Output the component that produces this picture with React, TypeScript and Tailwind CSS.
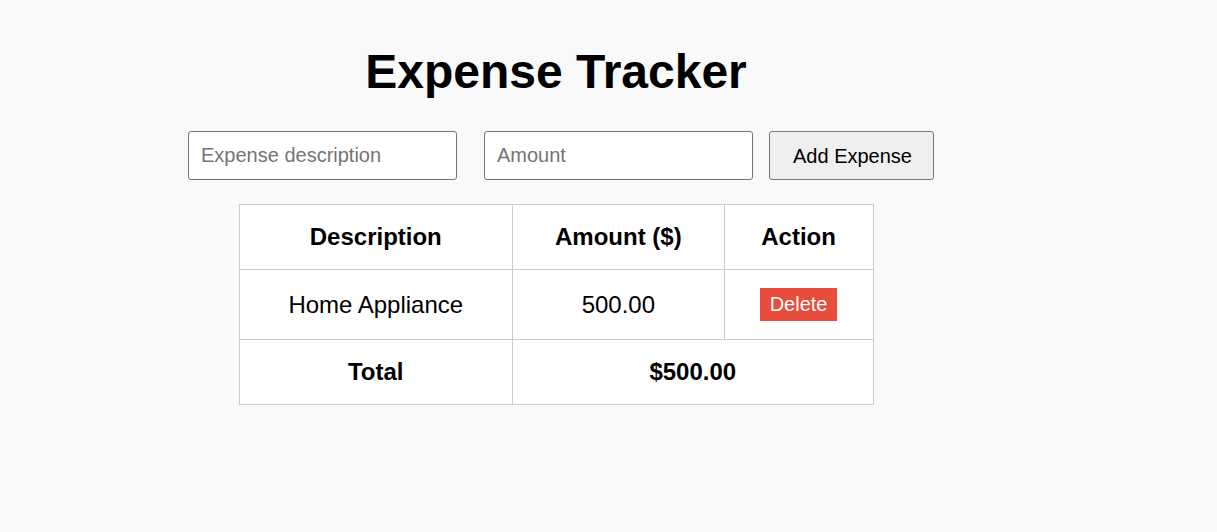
import React, { useState } from 'react'

type Expense = { id: number; description: string; amount: number }

export default function App() {
  const [expenses, setExpenses] = useState<Expense[]>([
    { id: 1, description: 'Home Appliance', amount: 500 },
  ])
  const [description, setDescription] = useState('')
  const [amount, setAmount] = useState('')

  const total = expenses.reduce((sum, e) => sum + e.amount, 0)

  const addExpense = () => {
    const value = parseFloat(amount)
    if (!description.trim() || isNaN(value)) return
    setExpenses([...expenses, { id: Date.now(), description, amount: value }])
    setDescription('')
    setAmount('')
  }

  const cell = 'border border-[#cccccc] px-[15px] py-[18px] text-center'

  return (
    <div className="min-h-[532px] w-full bg-[#f9f9f9] font-['Liberation_Sans',Arial,sans-serif] text-black">
      <div className="flex w-[1112px] flex-col items-center pt-[44px]">
        <h1 className="text-[48px] leading-[55px] font-bold">Expense Tracker</h1>

        <div className="mt-[32px] flex items-center pl-[10px]">
          <input
            type="text"
            placeholder="Expense description"
            value={description}
            onChange={(e) => setDescription(e.target.value)}
            className="h-[49px] w-[269px] rounded-[3px] border border-[#767676] bg-white px-[12px] text-[20px] placeholder:text-[#757575] outline-none"
          />
          <input
            type="number"
            placeholder="Amount"
            value={amount}
            onChange={(e) => setAmount(e.target.value)}
            className="ml-[27px] h-[49px] w-[269px] rounded-[3px] border border-[#767676] bg-white px-[12px] text-[20px] placeholder:text-[#757575] outline-none"
          />
          <button
            type="button"
            onClick={addExpense}
            className="ml-[16px] h-[49px] w-[165px] rounded-[3px] border border-[#767676] bg-[#efefef] pl-[2px] text-[20px]"
          >
            Add Expense
          </button>
        </div>

        <table className="mt-[24px] w-[635px] border-collapse bg-white text-[24px] leading-[28px]">
          <thead>
            <tr>
              <th className={`${cell} w-[274px] font-bold`}>Description</th>
              <th className={`${cell} w-[212px] font-bold`}>Amount ($)</th>
              <th className={`${cell} w-[149px] font-bold`}>Action</th>
            </tr>
          </thead>
          <tbody>
            {expenses.map((e) => (
              <tr key={e.id}>
                <td className={cell}>{e.description}</td>
                <td className={cell}>{e.amount.toFixed(2)}</td>
                <td className={cell}>
                  <button
                    type="button"
                    onClick={() => setExpenses(expenses.filter((x) => x.id !== e.id))}
                    className="mx-auto block bg-[#e74c3c] px-[10px] py-[5px] text-[20px] leading-[23px] text-white"
                  >
                    Delete
                  </button>
                </td>
              </tr>
            ))}
            <tr>
              <td className={`${cell} font-bold`}>Total</td>
              <td colSpan={2} className={`${cell} font-bold`}>
                ${total.toFixed(2)}
              </td>
            </tr>
          </tbody>
        </table>
      </div>
    </div>
  )
}
